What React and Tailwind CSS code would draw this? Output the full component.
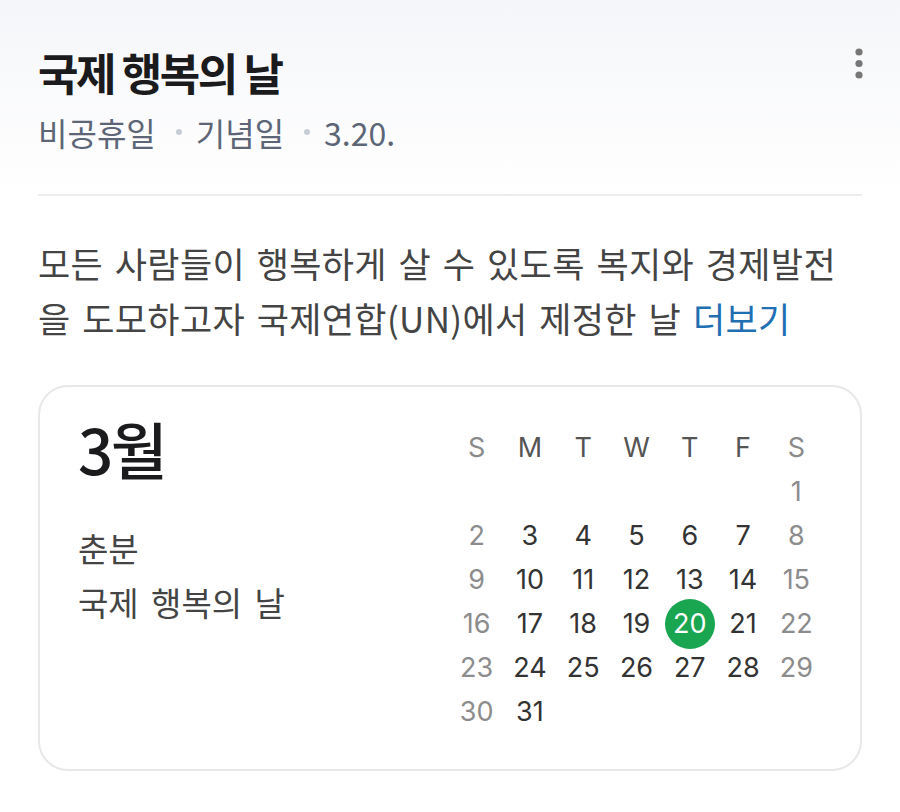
const days = [
  ...Array(6).fill(null),
  ...Array.from({ length: 31 }, (_, i) => i + 1),
];

const week = ['S', 'M', 'T', 'W', 'T', 'F', 'S'];

function MoreIcon() {
  return (
    <svg width="10" height="34" viewBox="0 0 10 34" className="text-[#777]">
      <circle cx="5" cy="5" r="3.6" fill="currentColor" />
      <circle cx="5" cy="16.5" r="3.6" fill="currentColor" />
      <circle cx="5" cy="28" r="3.6" fill="currentColor" />
    </svg>
  );
}

function Dot() {
  return <span className="ml-[20px] mr-[14px] inline-block h-[6px] w-[6px] rounded-full bg-[#c8cdd5]" />;
}

export default function App() {
  return (
    <div className="h-[812px] w-[900px] overflow-hidden bg-white font-['Noto_Sans_CJK_KR',sans-serif]">
      <div className="bg-linear-to-b from-[#f5f6f9] to-white px-[38px] pt-[44px]">
        <div className="flex items-start justify-between">
          <h1 className="text-[44px] font-bold leading-[56px] tracking-[-0.055em] text-[#1b1b1e]">
            국제 행복의 날
          </h1>
          <div className="mr-[-2px] mt-[3px]">
            <MoreIcon />
          </div>
        </div>
        <div className="mt-[10px] flex items-center text-[32px] leading-[44px] text-[#5c6677]">
          <span>비공휴일</span>
          <Dot />
          <span>기념일</span>
          <Dot />
          <span>3.20.</span>
        </div>
        <div className="mt-[40px] h-[2px] bg-[#ededed]" />
      </div>

      <div className="px-[38px]">
        <p className="mt-[39px] text-[35px] leading-[55px] tracking-[0.01em] text-[#444] [word-spacing:0.1em]">
          모든 사람들이 행복하게 살 수 있도록 복지와 경제발전을 도모하고자 국제연합(UN)에서 제정한 날{' '}
          <span className="text-[#1f6fb2]">더보기</span>
        </p>

        <div className="mt-[40px] flex rounded-[30px] border-2 border-[#e8e8e8] pb-[35px] pl-[38px] pr-[37px] pt-[39px]">
          <div className="flex-1">
            <div className="text-[62px] font-medium leading-[44px] tracking-[-0.04em] text-[#1b1b1e]">3월</div>
            <div className="mt-[51px] text-[33px] leading-[54px] text-[#444] [word-spacing:0.15em]">
              <div>춘분</div>
              <div>국제 행복의 날</div>
            </div>
          </div>
          <div className="grid w-[373px] grid-cols-7 font-['Inter',sans-serif] text-[27px]">
            {week.map((d, i) => (
              <div
                key={'w' + i}
                className={`flex h-[44px] items-center justify-center ${
                  i === 0 || i === 6 ? 'text-[#8a8a8a]' : 'text-[#555]'
                }`}
              >
                {d}
              </div>
            ))}
            {days.map((d, i) => {
              const weekend = i % 7 === 0 || i % 7 === 6;
              if (d === 20) {
                return (
                  <div key={i} className="flex h-[44px] items-center justify-center">
                    <span className="flex h-[50px] w-[50px] items-center justify-center rounded-full bg-[#1aa551] text-white">
                      20
                    </span>
                  </div>
                );
              }
              return (
                <div
                  key={i}
                  className={`flex h-[44px] items-center justify-center ${
                    weekend ? 'text-[#8c8c8c]' : 'text-[#333]'
                  }`}
                >
                  {d}
                </div>
              );
            })}
          </div>
        </div>
      </div>
    </div>
  );
}
